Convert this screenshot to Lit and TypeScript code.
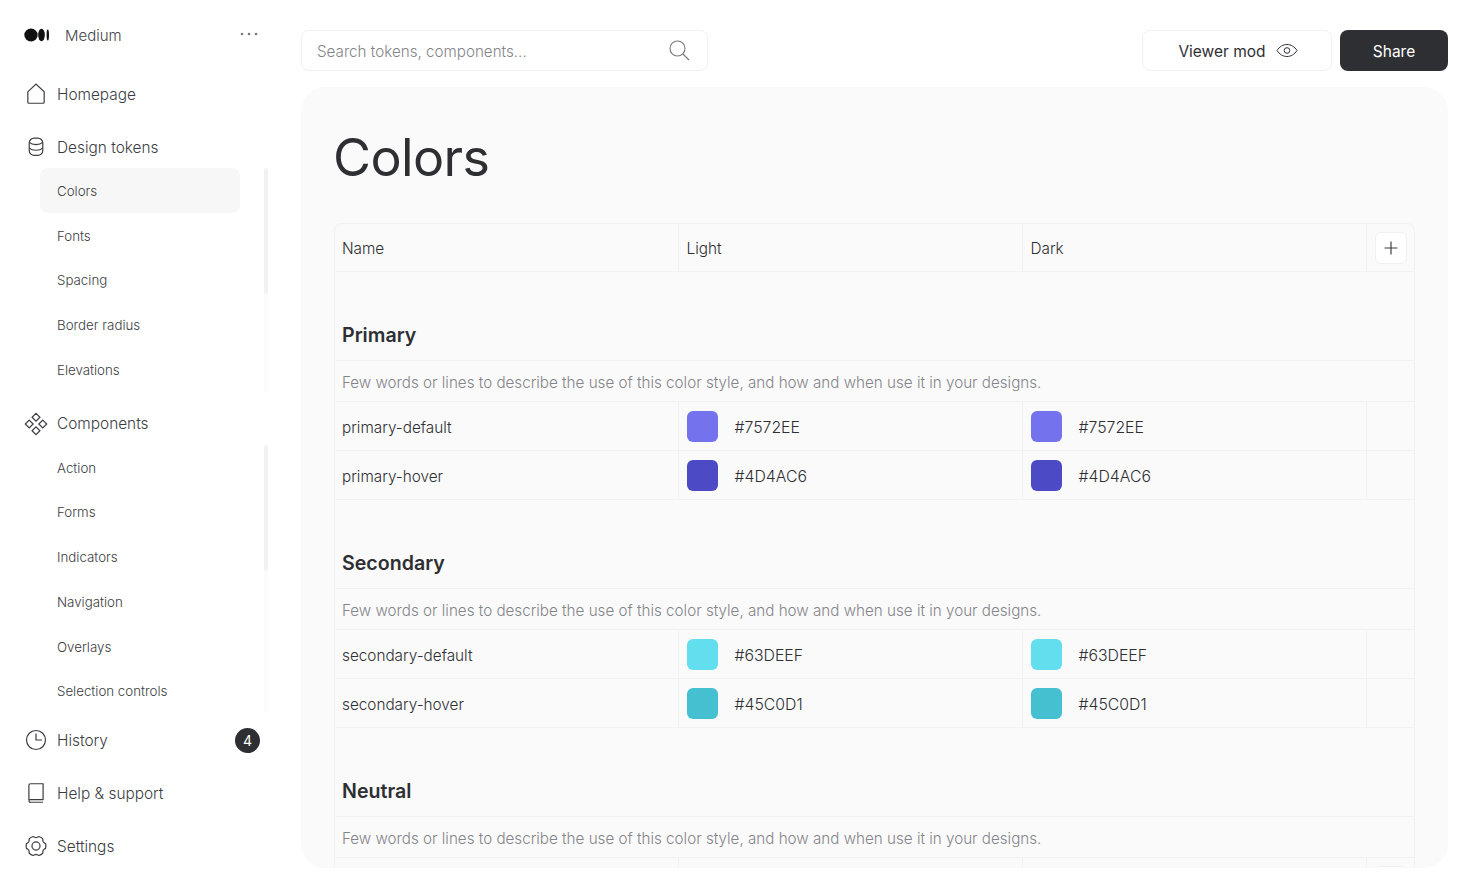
import { LitElement, html, css, svg } from "lit";
import { customElement } from "lit/decorators.js";

const icons: Record<string, unknown> = {
  home: svg`<path d="M3.500 9 11 2l7.500 7v9.500a1 1 0 0 1-1 1h-13a1 1 0 0 1-1-1z"/>`,
  db: svg`<rect x="4.800" y="2.800" width="12.400" height="15.800" rx="4.500"/><path d="M4.800 6.800c1.400 1.300 3.700 2 6.200 2s4.800-.7 6.200-2M4.800 12c1.400 1.300 3.700 2 6.200 2s4.800-.7 6.200-2"/>`,
  comp: svg`<path d="M11 1.200 14.600 4.800 11 8.400 7.400 4.800zM4.800 7.400 8.400 11 4.800 14.600 1.200 11zM17.200 7.400 20.800 11 17.200 14.600 13.600 11zM11 13.600 14.600 17.200 11 20.800 7.400 17.200z"/>`,
  clock: svg`<circle cx="11" cy="11" r="8.700"/><path d="M11 5v6h5.500"/>`,
  book: svg`<path d="M4.500 17.500V4A1.500 1.500 0 0 1 6 2.500h11.500v14.500H6a1.500 1.500 0 0 0-1.500 1.300A1.400 1.400 0 0 0 6 19.500h11.500"/>`,
  gear: svg`<circle cx="11" cy="11" r="3.700"/><path d="M8.300 2.300c1 .3 1.700 1 2.700 1s1.700-.7 2.700-1c1.300.4 2.500 1.100 3.500 2 .2 1-.1 2 .4 2.800s1.500 1.100 2.200 1.800c.3 1.400.3 2.800 0 4.200-.7.700-1.700 1-2.200 1.800s-.2 1.800-.4 2.800c-1 .9-2.200 1.600-3.500 2-1-.3-1.700-1-2.700-1s-1.700.7-2.700 1c-1.300-.4-2.500-1.100-3.500-2-.2-1 .1-2-.4-2.800s-1.500-1.100-2.200-1.800c-.3-1.400-.3-2.800 0-4.200.7-.7 1.700-1 2.200-1.800s.2-1.800.4-2.800c1-.9 2.200-1.600 3.500-2z"/>`,
};

const navIcon = (n: string) => html`<svg class="ni" viewBox="0 0 22 22" aria-hidden="true">${icons[n]}</svg>`;
const plus = html`<button class="plus" aria-label="Add"><svg viewBox="0 0 16 16"><path d="M8 1.500v13M1.500 8h13"/></svg></button>`;

interface Row { name: string; hex: string }
interface Group { title: string; rows: Row[]; stub?: boolean }

const groups: Group[] = [
  { title: "Primary", rows: [{ name: "primary-default", hex: "#7572EE" }, { name: "primary-hover", hex: "#4D4AC6" }] },
  { title: "Secondary", rows: [{ name: "secondary-default", hex: "#63DEEF" }, { name: "secondary-hover", hex: "#45C0D1" }] },
  { title: "Neutral", rows: [], stub: true },
];

const DESC = "Few words or lines to describe the use of this color style, and how and when use it in your designs.";

@customElement("app-root")
export class AppRoot extends LitElement {
  static styles = css`
    :host { display: block; height: 879px; overflow: hidden; background: #fff; color: #2e2f33;
      font-family: "Inter", "Noto Sans", sans-serif; }
    * { box-sizing: border-box; }
    .page { display: flex; height: 879px; }
    .side { width: 285px; flex: none; padding: 0 0 0 24px; }
    .brand { display: flex; align-items: center; height: 70px; padding-right: 24px; }
    .brand .logo { width: 26px; height: 14px; }
    .brand span { margin-left: 15px; font-size: 15px; color: #44454a; flex: 1; font-weight: 300; }
    .dots { width: 18px; height: 4px; margin-right: 3px; margin-top: -2px; }
    .nav { display: flex; align-items: center; height: 42px; gap: 9px; font-size: 15.400px; font-weight: 300; color: #3c3d42; }
    .ni { width: 24px; height: 24px; flex: none; fill: none; stroke: #3c3d42; stroke-width: 1.100; }
    .n-home { margin-top: 3px; }
    .n-next { margin-top: 11px; }
    .n-hist { margin-top: 6px; }
    .sub { display: flex; margin-left: 16px; width: 228px; justify-content: space-between; }
    .sublist { width: 200px; display: flex; flex-direction: column; }
    .subitem { height: 44.750px; display: flex; align-items: center; padding: 1px 0 0 17px; font-size: 13.300px; font-weight: 300;
      color: #3c3d42; border-radius: 8px; }
    .subitem.on { background: #f7f7f7; }
    .track { width: 4px; background: #fbfbfb; border-radius: 2px; position: relative; }
    .thumb { position: absolute; inset: 0 0 auto 0; height: 126px; background: #f2f2f2; border-radius: 2px; }
    .badge { width: 25px; height: 25px; border-radius: 50%; background: #2e2f33; color: #fff; font-size: 14px; font-weight: 400;
      display: flex; align-items: center; justify-content: center; margin-left: auto; }
    .hist-row { width: 236px; }

    .main { width: 1147px; margin-left: 16px; display: flex; flex-direction: column; padding-top: 30px; }
    .top { display: flex; align-items: stretch; height: 41px; }
    .search { width: 407px; border: 1px solid #f0f0f0; border-radius: 8px; display: flex; align-items: center;
      padding: 2px 17px 0 15px; justify-content: space-between; font-size: 15.200px; font-weight: 300; color: #84858a; }
    .search svg { width: 22px; height: 22px; fill: none; stroke: #77787c; stroke-width: 1.100; margin-top: -4px; }
    .viewer { margin-left: auto; width: 190px; border: 1px solid #f0f0f0; border-radius: 8px; display: flex;
      align-items: center; justify-content: center; gap: 10px; font-size: 15.500px; color: #2e2f33; background: #fff; font-family: inherit; padding: 2px 0 0 2px; }
    .viewer svg { width: 22px; height: 15px; fill: none; stroke: #2e2f33; stroke-width: 1; margin-top: -2px; }
    .share { margin-left: 8px; width: 108px; border: 0; border-radius: 8px; background: #2e2f33; color: #fff;
      font-size: 15.500px; font-family: inherit; padding: 2px 0 0; }
    .card { margin-top: 16px; height: 781px; background: #fafafa; border-radius: 24px; overflow: hidden; padding: 0 33px; }
    h1 { margin: 0 0 0 -1px; padding-top: 38px; height: 136px; font-size: 52px; line-height: 66px; font-weight: 400; color: #2e2f33; letter-spacing: -.6px; }
    .table { border: 1px solid #f2f2f2; border-bottom: 0; border-radius: 8px 8px 0 0; }
    .row { display: grid; grid-template-columns: 343.500px 344px 344.500px 48px; border-bottom: 1px solid #f2f2f2; height: 49px; }
    .row.head { height: 48px; }
    .cell { display: flex; align-items: center; padding-left: 7px; font-size: 15.300px; font-weight: 300; color: #2e2f33; border-right: 1px solid #f2f2f2; min-width: 0; }
    .cell.hex { gap: 17px; font-size: 15.800px; }
    .cell:last-child { border-right: 0; }
    .cell + .cell { padding-left: 8px; }
    .t { padding-top: 2px; }
    .sw { width: 31px; height: 31px; border-radius: 6px; flex: none; }
    .plus { width: 32px; height: 32px; border: 1px solid #f0f0f0; border-radius: 6px; background: #fff; display: flex; align-items: center; justify-content: center; padding: 0; }
    .plus svg { width: 16px; height: 16px; stroke: #3c3d42; stroke-width: 1.200; fill: none; }
    .title { height: 89px; display: flex; align-items: flex-end; padding: 0 0 11px 7px; font-size: 19.600px; font-weight: 600; color: #2e2f33; border-bottom: 1px solid #f2f2f2; line-height: 28px; }
    .desc { height: 41px; display: flex; align-items: center; padding: 2px 0 0 7px; font-size: 15.200px; font-weight: 300; color: #84858a; border-bottom: 1px solid #f2f2f2; }
  `;

  private sub(items: string[], active?: string) {
    return html`<div class="sub">
      <div class="sublist">
        ${items.map((i) => html`<div class="subitem ${i === active ? "on" : ""}">${i}</div>`)}
      </div>
      <div class="track"><div class="thumb"></div></div>
    </div>`;
  }

  private group(g: Group) {
    return html`
      <div class="title">${g.title}</div>
      <div class="desc">${DESC}</div>
      ${g.rows.map((r) => html`<div class="row">
        <div class="cell"><span class="t">${r.name}</span></div>
        <div class="cell hex"><span class="sw" style="background:${r.hex}"></span><span class="t">${r.hex}</span></div>
        <div class="cell hex"><span class="sw" style="background:${r.hex}"></span><span class="t">${r.hex}</span></div>
        <div class="cell"></div>
      </div>`)}
      ${g.stub ? html`<div class="row"><div class="cell"></div><div class="cell"></div><div class="cell"></div><div class="cell">${plus}</div></div>` : ""}
    `;
  }

  render() {
    return html`<div class="page">
      <aside class="side">
        <div class="brand">
          <svg class="logo" viewBox="0 0 26 14" aria-hidden="true"><ellipse cx="7" cy="7" rx="6.700" ry="6.500" fill="#111"/><ellipse cx="17.500" cy="7" rx="3.300" ry="6.200" fill="#111"/><ellipse cx="23.800" cy="7" rx="1.200" ry="5.600" fill="#111"/></svg>
          <span>Medium</span>
          <svg class="dots" viewBox="0 0 18 4" aria-hidden="true"><circle cx="2" cy="2" r="1.300" fill="#77787c"/><circle cx="9" cy="2" r="1.300" fill="#77787c"/><circle cx="16" cy="2" r="1.300" fill="#77787c"/></svg>
        </div>
        <div class="nav n-home">${navIcon("home")}Homepage</div>
        <div class="nav n-next">${navIcon("db")}Design tokens</div>
        ${this.sub(["Colors", "Fonts", "Spacing", "Border radius", "Elevations"], "Colors")}
        <div class="nav n-next">${navIcon("comp")}Components</div>
        ${this.sub(["Action", "Forms", "Indicators", "Navigation", "Overlays", "Selection controls"])}
        <div class="nav n-hist hist-row">${navIcon("clock")}History<span class="badge">4</span></div>
        <div class="nav n-next">${navIcon("book")}Help &amp; support</div>
        <div class="nav n-next">${navIcon("gear")}Settings</div>
      </aside>
      <main class="main">
        <div class="top">
          <div class="search">Search tokens, components...
            <svg viewBox="0 0 22 22" aria-hidden="true"><circle cx="9.500" cy="9.500" r="7.500"/><path d="M15 15l6 6"/></svg>
          </div>
          <button class="viewer">Viewer mod
            <svg viewBox="0 0 22 15" aria-hidden="true"><path d="M1 7.500c2.500-3.800 6-6 10-6s7.500 2.200 10 6c-2.500 3.800-6 6-10 6s-7.500-2.200-10-6z"/><circle cx="11" cy="7.500" r="2.800"/></svg>
          </button>
          <button class="share">Share</button>
        </div>
        <section class="card">
          <h1>Colors</h1>
          <div class="table">
            <div class="row head">
              <div class="cell"><span class="t">Name</span></div><div class="cell"><span class="t">Light</span></div><div class="cell"><span class="t">Dark</span></div>
              <div class="cell">${plus}</div>
            </div>
            ${groups.map((g) => this.group(g))}
          </div>
        </section>
      </main>
    </div>`;
  }
}
